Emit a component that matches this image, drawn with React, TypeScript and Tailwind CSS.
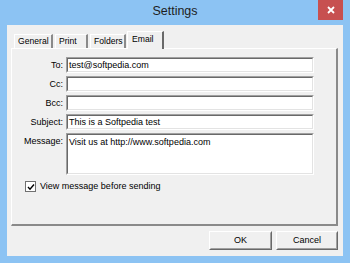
const FONT = { fontFamily: '"Liberation Sans", Arial, sans-serif' };

function Field({ label, value, tall }: { label: string; value?: string; tall?: boolean }) {
  return (
    <div className="flex items-start gap-[3px]">
      <div className="w-[51px] text-right text-[9px] leading-[16px] text-black">{label}</div>
      <div
        className={`w-[248px] ${tall ? 'h-[42px]' : 'h-[16px]'} border border-t-[#a0a0a0] border-l-[#a0a0a0] border-r-white border-b-white`}
      >
        <div className="h-full border border-t-[#696969] border-l-[#696969] border-r-[#e3e3e3] border-b-[#e3e3e3] bg-white">
          <div className={`pl-[1px] text-[9px] text-black ${tall ? 'pt-[2px] leading-[10px]' : 'leading-[12px]'}`}>{value}</div>
        </div>
      </div>
    </div>
  );
}

function Tab({ label, width, active }: { label: string; width: string; active?: boolean }) {
  if (active) {
    return (
      <div
        className={`${width} h-[18px] relative z-10 -mb-[1px] -ml-[1px] bg-[#f0f0f0] border-t border-l border-white border-r-2 border-r-[#696969] text-[8.6px] leading-[13px] pl-[4px] pt-[1px] text-black`}
      >
        {label}
      </div>
    );
  }
  return (
    <div
      className={`${width} h-[14px] bg-[#f0f0f0] border-t border-l border-white border-r-2 border-r-[#8a8a8a] text-[8.6px] leading-[13px] pl-[3px] text-black`}
    >
      {label}
    </div>
  );
}

function Button({ label, width }: { label: string; width: string }) {
  return (
    <div className={`${width} h-[19px] border border-t-white border-l-white border-r-[#696969] border-b-[#696969]`}>
      <div className="h-full border border-t-[#f0f0f0] border-l-[#f0f0f0] border-r-[#a0a0a0] border-b-[#a0a0a0] bg-[#f0f0f0] flex items-center justify-center text-[9px] text-black">
        {label}
      </div>
    </div>
  );
}

export default function App() {
  return (
    <div className="w-[350px] h-[263px] bg-[#8cc3f3] flex flex-col overflow-hidden" style={FONT}>
      {/* Title bar */}
      <div className="relative h-[25px] flex items-center justify-center">
        <span className="text-[12.5px] text-[#1e1e1e] -mt-[2px]">Settings</span>
        <div className="absolute right-[7px] top-0 w-[25px] h-[20px] bg-[#c75050] flex items-center justify-center">
          <svg width="8" height="8" viewBox="0 0 8 8">
            <path d="M1 1 L7 7 M7 1 L1 7" stroke="white" strokeWidth="1.8" />
          </svg>
        </div>
      </div>

      {/* Client area */}
      <div className="mx-[7px] h-[231px] bg-[#f0f0f0] flex flex-col pl-[4px] pr-[5px]">
        {/* Tabs */}
        <div className="flex items-end h-[23px] pl-[3px] gap-[2px]">
          <Tab label="General" width="w-[39px]" />
          <Tab label="Print" width="w-[33px]" />
          <Tab label="Folders" width="w-[36px]" />
          <Tab label="Email" width="w-[37px]" active />
        </div>

        {/* Panel */}
        <div className="h-[178px] border-t border-l border-white border-r-2 border-b-2 border-r-[#8a8a8a] border-b-[#8a8a8a] pt-[8px]">
          <div className="flex flex-col gap-[3px]">
            <Field label="To:" value="test@softpedia.com" />
            <Field label="Cc:" />
            <Field label="Bcc:" />
            <Field label="Subject:" value="This is a Softpedia test" />
            <Field label="Message:" value="Visit us at http://www.softpedia.com" tall />
          </div>

          <div className="flex items-center gap-[4px] pl-[13px] mt-[5px]">
            <div className="w-[11px] h-[11px] border border-[#707070] bg-white flex items-center justify-center">
              <svg width="8" height="8" viewBox="0 0 8 8">
                <path d="M1 4 L3 6.2 L7 1.5" stroke="black" strokeWidth="1.4" fill="none" />
              </svg>
            </div>
            <span className="text-[9px] text-black">View message before sending</span>
          </div>
        </div>

        {/* Buttons */}
        <div className="flex justify-end gap-[4px] mt-[5px]">
          <Button label="OK" width="w-[63px]" />
          <Button label="Cancel" width="w-[62px]" />
        </div>
      </div>
    </div>
  );
}
